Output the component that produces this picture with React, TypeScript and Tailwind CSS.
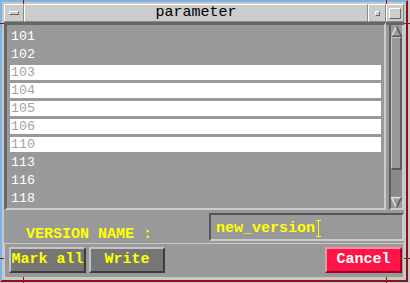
import React from "react";

const rows: [string, boolean][] = [
  ["101", false],
  ["102", false],
  ["103", true],
  ["104", true],
  ["105", true],
  ["106", true],
  ["110", true],
  ["113", false],
  ["116", false],
  ["118", false],
];

function UpArrow() {
  return (
    <svg width="11" height="11" viewBox="0 0 11 11" className="block">
      <polygon points="5.5,0.5 10.5,10.5 0.5,10.5" fill="#999999" />
      <line x1="5.5" y1="0.5" x2="0.5" y2="10.5" stroke="#e0e0e0" strokeWidth="1.5" />
      <line x1="5.5" y1="0.5" x2="10.5" y2="10.5" stroke="#555555" strokeWidth="1.5" />
      <line x1="0.5" y1="10.3" x2="10.5" y2="10.3" stroke="#555555" strokeWidth="1.5" />
    </svg>
  );
}

function DownArrow() {
  return (
    <svg width="11" height="11" viewBox="0 0 11 11" className="block">
      <polygon points="0.5,0.5 10.5,0.5 5.5,10.5" fill="#999999" />
      <line x1="0.5" y1="0.7" x2="10.5" y2="0.7" stroke="#e0e0e0" strokeWidth="1.5" />
      <line x1="0.5" y1="0.5" x2="5.5" y2="10.5" stroke="#e0e0e0" strokeWidth="1.5" />
      <line x1="10.5" y1="0.5" x2="5.5" y2="10.5" stroke="#555555" strokeWidth="1.5" />
    </svg>
  );
}

export default function App() {
  return (
    <div className="relative w-[410px] h-[283px] overflow-hidden bg-[#c8c8c8] pr-[2px] pb-[1px] font-['Liberation_Mono',monospace]">
      <div className="flex h-full w-full flex-col border-l-2 border-t-2 border-l-[#7eb2e0] border-t-[#7eb2e0] border-r-2 border-b-2 border-r-[#8c1414] border-b-[#8c1414] pl-[2px] pt-[2px] pr-[2px] pb-[2px]">
        {/* title bar */}
        <div className="flex h-[18px] shrink-0">
          <div className="flex w-[20px] items-center justify-center border-t border-l border-t-white border-l-white border-b border-r border-b-[#8a8a8a] border-r-[#8a8a8a] bg-[#cccccc]">
            <div className="h-[4px] w-[10px] border-t border-l border-t-white border-l-white border-b border-r border-b-[#666] border-r-[#666]" />
          </div>
          <div className="flex flex-1 items-center justify-center border-t border-l border-t-white border-l-white border-b border-r border-b-[#8a8a8a] border-r-[#8a8a8a] bg-[#cccccc] text-[15px] leading-[16px] text-black">
            parameter
          </div>
          <div className="flex w-[18px] items-center justify-center border-t border-l border-t-white border-l-white border-b border-r border-b-[#8a8a8a] border-r-[#8a8a8a] bg-[#cccccc]">
            <div className="h-[5px] w-[5px] border-t border-l border-t-white border-l-white border-b border-r border-b-[#666] border-r-[#666]" />
          </div>
          <div className="flex w-[18px] items-center justify-center border-t border-l border-t-white border-l-white border-b border-r border-b-[#8a8a8a] border-r-[#8a8a8a] bg-[#cccccc]">
            <div className="h-[11px] w-[12px] border-t border-l border-t-white border-l-white border-b border-r border-b-[#666] border-r-[#666]" />
          </div>
        </div>

        {/* client area */}
        <div className="flex flex-1 flex-col bg-[#999999]">
          {/* list + scrollbar */}
          <div className="flex h-[188px] shrink-0">
            <div className="flex flex-1 flex-col gap-[3px] border-t-[3px] border-l-[3px] border-t-[#666] border-l-[#666] border-b-2 border-r-2 border-b-[#cccccc] border-r-[#cccccc] px-[3px] pt-[4px] text-[13.3px]">
              {rows.map(([label, sel]) => (
                <div
                  key={label}
                  className={
                    sel
                      ? "h-[15px] bg-white pl-[1px] leading-[16px] text-[#a4a4a4]"
                      : "h-[15px] pl-[1px] leading-[16px] text-white"
                  }
                >
                  {label}
                </div>
              ))}
            </div>
            <div className="flex w-[18px] border-t-[3px] border-t-[#666] pl-[3px]">
              <div className="flex flex-1 flex-col border-l-2 border-l-[#5e5e5e] border-r-2 border-r-[#cccccc] border-b-2 border-b-[#cccccc] bg-[#8a8a8a]">
                <div className="flex h-[12px] items-center justify-center bg-[#999999]">
                  <UpArrow />
                </div>
                <div className="h-[133px] border-t border-l border-t-[#c8c8c8] border-l-[#c8c8c8] border-b-2 border-r-2 border-b-[#5a5a5a] border-r-[#5a5a5a] bg-[#999999]" />
                <div className="flex-1" />
                <div className="flex h-[12px] items-center justify-center bg-[#999999]">
                  <DownArrow />
                </div>
              </div>
            </div>
          </div>

          {/* version name row */}
          <div className="flex h-[33px] shrink-0 items-start">
            <div className="pl-[22px] pt-[17px] text-[15px] font-bold leading-[16px] text-[#ffff00]">
              VERSION NAME :
            </div>
            <div className="ml-auto mt-[3px] flex h-[28px] w-[195px] items-start border-t-2 border-l-2 border-t-[#555] border-l-[#555] border-b-2 border-r-2 border-b-[#cccccc] border-r-[#cccccc] pl-[5px] pt-[6px]">
              <span className="text-[15px] font-bold leading-[16px] text-[#ffff00]">new_version</span>
              <div className="relative -mt-[1px] ml-[1px] h-[17px] w-[5px]">
                <div className="absolute left-0 top-0 h-[1px] w-[5px] bg-[#ffff00]" />
                <div className="absolute left-[2px] top-0 h-[17px] w-[1px] bg-[#ffff00]" />
                <div className="absolute bottom-0 left-0 h-[1px] w-[5px] bg-[#ffff00]" />
              </div>
            </div>
          </div>

          {/* button row */}
          <div className="flex flex-1 items-start border border-[#c8c8c8] pl-[4px] pr-[1px] pt-[3px]">
            <button className="flex h-[26px] w-[77px] items-center justify-center border-t-2 border-l-2 border-t-[#c4c4c4] border-l-[#c4c4c4] border-b-2 border-r-2 border-b-[#3c3c3c] border-r-[#3c3c3c] bg-[#767676] text-[15px] font-bold leading-[16px] text-[#ffff00]">
              Mark all
            </button>
            <button className="ml-[3px] flex h-[26px] w-[76px] items-center justify-center border-t-2 border-l-2 border-t-[#c4c4c4] border-l-[#c4c4c4] border-b-2 border-r-2 border-b-[#3c3c3c] border-r-[#3c3c3c] bg-[#767676] text-[15px] font-bold leading-[16px] text-[#ffff00]">
              Write
            </button>
            <button className="ml-auto flex h-[26px] w-[77px] items-center justify-center border-t-2 border-l-2 border-t-[#ff8fa3] border-l-[#ff8fa3] border-b-2 border-r-2 border-b-[#9c0026] border-r-[#9c0026] bg-[#ff1447] text-[15px] font-bold leading-[16px] text-white">
              Cancel
            </button>
          </div>
        </div>
      </div>

      {/* frame resize grooves */}
      <div className="absolute left-[23px] top-0 h-[4px] w-[1px] bg-[#8c1414]" />
      <div className="absolute left-[386px] top-0 h-[4px] w-[1px] bg-[#8c1414]" />
      <div className="absolute left-0 top-[23px] h-[1px] w-[4px] bg-[#8c1414]" />
      <div className="absolute right-0 top-[23px] h-[1px] w-[6px] bg-[#8c1414]" />
      <div className="absolute left-0 top-[258px] h-[1px] w-[4px] bg-[#8c1414]" />
      <div className="absolute right-0 top-[258px] h-[1px] w-[6px] bg-[#8c1414]" />
      <div className="absolute bottom-0 left-[23px] h-[6px] w-[1px] bg-[#8c1414]" />
      <div className="absolute bottom-0 left-[386px] h-[6px] w-[1px] bg-[#8c1414]" />
    </div>
  );
}
